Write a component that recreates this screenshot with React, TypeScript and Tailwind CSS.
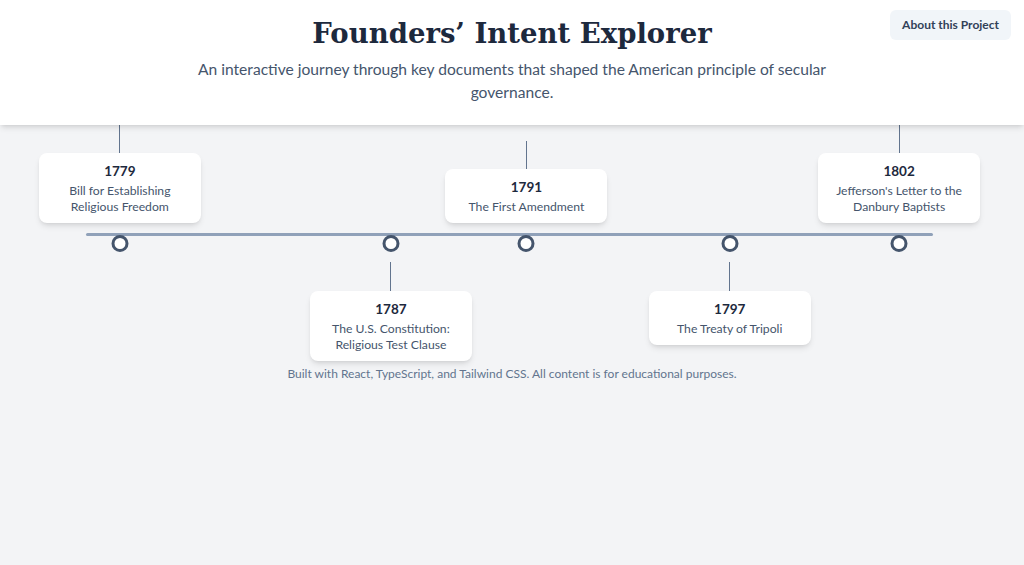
const events = [
  { year: 1779, title: "Bill for Establishing Religious Freedom", side: "top" },
  { year: 1787, title: "The U.S. Constitution: Religious Test Clause", side: "bottom" },
  { year: 1791, title: "The First Amendment", side: "top" },
  { year: 1797, title: "The Treaty of Tripoli", side: "bottom" },
  { year: 1802, title: "Jefferson's Letter to the Danbury Baptists", side: "top" },
];

const first = 1779;
const last = 1802;

const Card = ({ year, title }: { year: number; title: string }) => (
  <div className="w-[162px] rounded-lg bg-white px-3 py-2 text-center shadow-md">
    <div className="mb-0.5 text-[13.5px] font-bold leading-5 text-slate-800">{year}</div>
    <div className="text-[12.2px] leading-4 text-slate-600">{title}</div>
  </div>
);

export default function App() {
  return (
    <div className="min-h-[565px] bg-gray-100 font-['Lato',sans-serif]">
      <header className="relative z-10 h-[125px] bg-white px-4 pt-[13px] text-center shadow-md">
        <h1 className="font-['DejaVu_Serif',serif] text-[27.5px] font-bold leading-10 text-slate-800">
          Founders’ Intent Explorer
        </h1>
        <p className="mx-auto mt-[5px] max-w-[650px] text-[15.6px] leading-[23px] text-slate-600">
          An interactive journey through key documents that shaped the American principle of secular
          governance.
        </p>
        <button className="absolute right-[13px] top-[10px] rounded-md bg-slate-100 px-3 py-[7px] text-xs font-bold text-slate-700">
          About this Project
        </button>
      </header>

      <main>
        <div className="relative ml-[86px] h-[239px] w-[847px]">
          <div className="absolute left-0 right-0 top-[108px] h-[3px] rounded-full bg-slate-400" />
          {events.map((e) => {
            const left = 4 + ((e.year - first) / (last - first)) * 92;
            return (
              <div key={e.year}>
                <div
                  className="absolute top-[110px] h-[17px] w-[17px] -translate-x-1/2 rounded-full border-[3px] border-slate-600 bg-white"
                  style={{ left: `${left}%` }}
                />
                {e.side === "top" ? (
                  <div
                    className="absolute top-0 flex h-[98px] -translate-x-1/2 flex-col items-center justify-end"
                    style={{ left: `${left}%` }}
                  >
                    <div className="h-[28px] w-px bg-slate-500" />
                    <Card year={e.year} title={e.title} />
                  </div>
                ) : (
                  <div
                    className="absolute top-[137px] flex -translate-x-1/2 flex-col items-center"
                    style={{ left: `${left}%` }}
                  >
                    <div className="h-[29px] w-px bg-slate-500" />
                    <Card year={e.year} title={e.title} />
                  </div>
                )}
              </div>
            );
          })}
        </div>
        <p className="text-center text-xs leading-5 text-slate-500">
          Built with React, TypeScript, and Tailwind CSS. All content is for educational purposes.
        </p>
      </main>
    </div>
  );
}
